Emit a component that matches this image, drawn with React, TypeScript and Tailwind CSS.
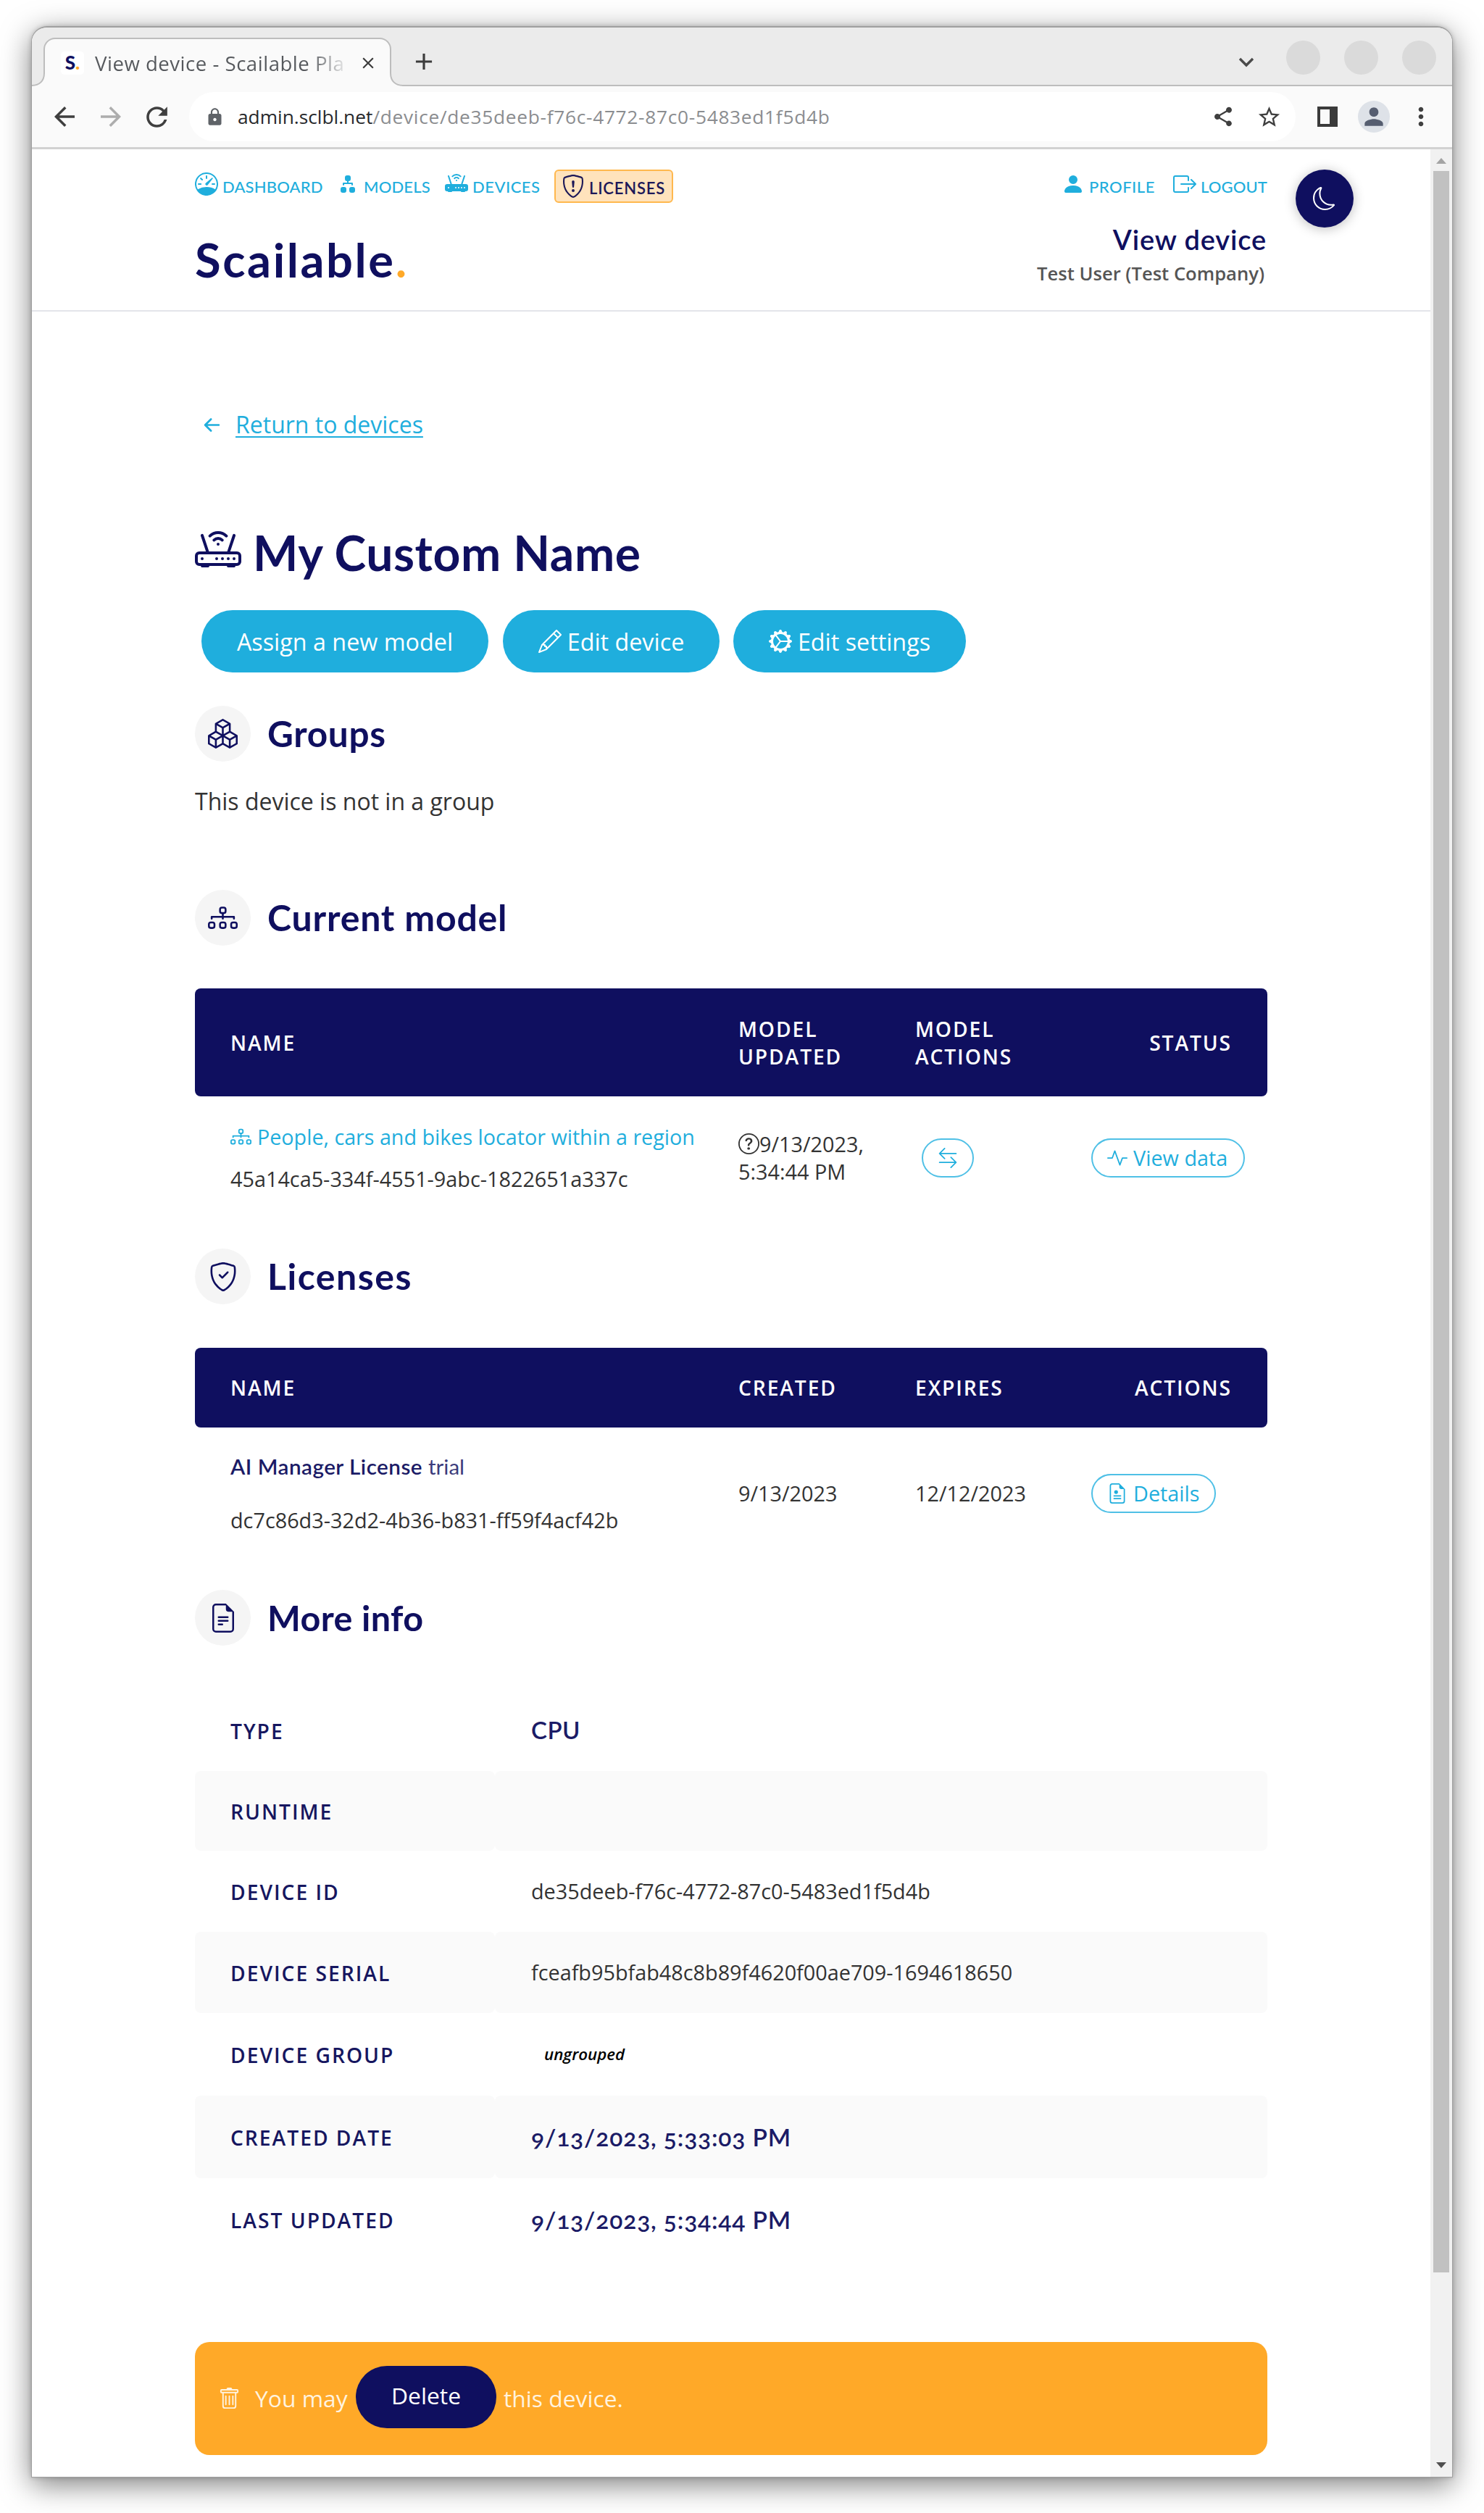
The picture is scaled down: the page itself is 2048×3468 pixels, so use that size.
import type { ReactNode } from 'react';
import {
  BsActivity,
  BsArrowLeftRight,
  BsBoxArrowRight,
  BsBoxes,
  BsDiagram2Fill,
  BsDiagram3,
  BsFileEarmarkText,
  BsGearWideConnected,
  BsMoon,
  BsPencil,
  BsPersonFill,
  BsQuestionCircle,
  BsRouter,
  BsRouterFill,
  BsArrowLeftShort,
  BsShieldCheck,
  BsShieldExclamation,
  BsSpeedometer,
  BsTrash,
} from 'react-icons/bs';
import {
  MdArrowBack,
  MdArrowForward,
  MdClose,
  MdAdd,
  MdLock,
  MdMoreVert,
  MdPerson,
  MdRefresh,
  MdShare,
  MdStarBorder,
} from 'react-icons/md';

const LATO = "font-['Lato',sans-serif]";

function TabStrip() {
  return (
    <div className="flex h-[81px] items-end border-b-2 border-[#bdbdbd] bg-[#ebebeb] pl-[16px]">
      <div className="relative -mb-[2px] flex h-[67px] w-[480px] items-center rounded-t-[16px] border-2 border-b-0 border-[#bdbdbd] bg-[#fafafa] pl-[22px]">
        <svg className="absolute -left-[18px] bottom-0 h-[18px] w-[18px]" viewBox="0 0 18 18">
          <path d="M0 18V17C10 17 17 11 17 0H18V18Z" fill="#fafafa" />
          <path d="M0 17C10 17 17 11 17 0" fill="none" stroke="#bdbdbd" strokeWidth="2" />
        </svg>
        <svg className="absolute -right-[18px] bottom-0 h-[18px] w-[18px]" viewBox="0 0 18 18">
          <path d="M18 18V17C8 17 1 11 1 0H0V18Z" fill="#fafafa" />
          <path d="M18 17C8 17 1 11 1 0" fill="none" stroke="#bdbdbd" strokeWidth="2" />
        </svg>
        <span className="flex h-[32px] w-[32px] items-center justify-center rounded-[5px] bg-white font-['Lato',sans-serif] text-[26px] font-black text-[#0f0f5f]">
          S<span className="text-[#ffa928]">.</span>
        </span>
        <span className="ml-[15px] w-[352px] overflow-hidden bg-linear-to-r from-[#55585c] from-84% to-transparent to-100% bg-clip-text text-[27.6px] leading-[40px] tracking-[0.5px] whitespace-nowrap text-transparent">
          View device - Scailable Pla
        </span>
        <MdClose className="ml-[12px] h-[26px] w-[26px] text-[#3c3c3c]" />
      </div>
      <MdAdd className="mb-[13px] ml-[26px] h-[38px] w-[38px] text-[#3c3c3c]" />
      <div className="mr-[22px] mb-[14px] ml-auto flex items-center">
        <svg className="mt-[12px] mr-[44px] h-[14px] w-[22px]" viewBox="0 0 22 14">
          <path d="M2 2L11 11L20 2" fill="none" stroke="#4a4a4a" strokeWidth="3.4" />
        </svg>
        <div className="flex gap-[33px]">
          <span className="h-[47px] w-[47px] rounded-full bg-[#dadada]" />
          <span className="h-[47px] w-[47px] rounded-full bg-[#dadada]" />
          <span className="h-[47px] w-[47px] rounded-full bg-[#dadada]" />
        </div>
      </div>
    </div>
  );
}

function Toolbar() {
  return (
    <div className="flex h-[87px] items-center border-b-3 border-[#d2d2d2] bg-[#fafafa] pl-[24px] text-[#3f3f3f]">
      <MdArrowBack className="h-[42px] w-[42px]" />
      <MdArrowForward className="ml-[22px] h-[42px] w-[42px] text-[#adadad]" />
      <MdRefresh className="ml-[21px] h-[43px] w-[43px]" />
      <div className="ml-[23px] flex h-[68px] w-[1527px] items-center rounded-full bg-white pl-[22px]">
        <MdLock className="h-[27px] w-[27px] text-[#5f6368]" />
        <span className="mt-[2px] ml-[18px] text-[26.3px] tracking-[0.7px] whitespace-nowrap text-[#8b8d90]">
          <span className="tracking-normal text-[#27292c]">admin.sclbl.net</span>/device/de35deeb-f76c-4772-87c0-5483ed1f5d4b
        </span>
        <MdShare className="ml-auto h-[32px] w-[32px]" />
        <MdStarBorder className="mr-[19px] ml-[30px] h-[35px] w-[35px]" />
      </div>
      <svg className="ml-[30px] h-[28px] w-[28px]" viewBox="0 0 28 28">
        <path d="M0 0H28V28H0ZM4 4V24H17V4Z" fill="#3a3a3a" fillRule="evenodd" />
      </svg>
      <span className="ml-[28px] flex h-[44px] w-[44px] items-center justify-center rounded-full bg-[#dee2e8]">
        <MdPerson className="h-[38px] w-[38px] text-[#565e70]" />
      </span>
      <MdMoreVert className="ml-[23px] h-[40px] w-[40px]" />
    </div>
  );
}

function NavItem({ icon, label, width }: { icon: ReactNode; label: string; width: string }) {
  return (
    <a className="flex items-center">
      <span className="mb-[6px]">{icon}</span>
      <span className={`ml-[6px] ${LATO} text-[22px] font-medium whitespace-nowrap ${width}`}>{label}</span>
    </a>
  );
}

function SiteHeader() {
  return (
    <header className="flex h-[224px] justify-between border-b-2 border-[#e3e5ea] pt-[28px] pr-[226px] pl-[225px] text-[#1faedd]">
      <div>
        <nav className="flex h-[46px] items-center gap-[21px]">
          <NavItem icon={<BsSpeedometer className="h-[32px] w-[32px]" />} label="DASHBOARD" width="w-[136px] tracking-[0.15px]" />
          <NavItem icon={<BsDiagram2Fill className="h-[32px] w-[32px]" />} label="MODELS" width="w-[91px] tracking-[0.15px]" />
          <NavItem icon={<BsRouterFill className="h-[32px] w-[32px]" />} label="DEVICES" width="w-[92px] tracking-[0.5px]" />
          <a className="flex h-[46px] w-[164px] items-center rounded-[6px] border-2 border-[#ffb84e] bg-[#ffe3bc] pl-[8px] text-[#1c1858]">
            <BsShieldExclamation className="h-[32px] w-[32px]" />
            <span className="mt-[4px] ml-[6px] font-['Lato',sans-serif] text-[22px] font-semibold tracking-[0.8px]">LICENSES</span>
          </a>
        </nav>
        <div className="mt-[38px] font-['Lato',sans-serif] text-[65px] leading-[80px] font-bold tracking-[2.6px] text-[#0f0f5f]">
          Scailable<span className="text-[#ffa928]">.</span>
        </div>
      </div>
      <div className="flex flex-col items-end">
        <nav className="flex h-[46px] items-center gap-[26px]">
          <NavItem icon={<BsPersonFill className="h-[32px] w-[32px]" />} label="PROFILE" width="w-[90px] tracking-[0.5px]" />
          <NavItem icon={<BsBoxArrowRight className="h-[32px] w-[32px]" />} label="LOGOUT" width="w-[91px] tracking-[0.1px]" />
        </nav>
        <div className="mt-[26px] font-['Lato',sans-serif] text-[38px] leading-[48px] font-semibold tracking-[0.85px] text-[#0f0f5f]">
          View device
        </div>
        <div className="mt-[4px] mr-[3px] text-[25.6px] leading-[40px] font-semibold text-[#555]">Test User (Test Company)</div>
      </div>
    </header>
  );
}

function SectionHeading({ icon, title, className }: { icon: ReactNode; title: string; className: string }) {
  return (
    <div className={`flex h-[77px] items-center font-['Lato',sans-serif] font-bold text-[#0f0f5f] ${className}`}>
      <span className="flex h-[77px] w-[77px] items-center justify-center rounded-full bg-[#f5f5f5]">{icon}</span>
      <h2 className="ml-[23px]">{title}</h2>
    </div>
  );
}

function FilePostIcon({ className }: { className: string }) {
  return (
    <svg className={className} viewBox="0 0 16 16" fill="currentColor">
      <path d="M14 4.5V14a2 2 0 0 1-2 2H4a2 2 0 0 1-2-2V2a2 2 0 0 1 2-2h5.500zm-3 0A1.500 1.500 0 0 1 9.500 3V1H4a1 1 0 0 0-1 1v12a1 1 0 0 0 1 1h8a1 1 0 0 0 1-1V4.500z" />
      <circle cx="7" cy="6.900" r="1.500" />
      <path d="M5 9.400h6v1H5zM5 11.500h6v1H5z" />
    </svg>
  );
}

const GRID = 'grid grid-cols-[701px_244px_243px_1fr] items-center pl-[49px]';
const HEAD = `${GRID} rounded-[8px] bg-[#0f0f5f] text-[28.2px] leading-[38px] font-semibold tracking-[1.9px] text-white`;
const PILL = 'inline-flex h-[54px] items-center rounded-full border-2 border-[#4fc0e6] text-[28.8px] text-[#1faedd]';
const BUTTON = 'flex h-[86px] items-center rounded-full bg-[#1faedd] text-[32.3px] text-white';

const details = [
  { label: 'TYPE', height: 'h-[112px]', value: 'CPU', style: 'cpu' },
  { label: 'RUNTIME', height: 'h-[110px]', value: '', style: 'plain' },
  { label: 'DEVICE ID', height: 'h-[112px]', value: 'de35deeb-f76c-4772-87c0-5483ed1f5d4b', style: 'plain' },
  { label: 'DEVICE SERIAL', height: 'h-[112px]', value: 'fceafb95bfab48c8b89f4620f00ae709-1694618650', style: 'plain' },
  { label: 'DEVICE GROUP', height: 'h-[114px]', value: 'ungrouped', style: 'italic' },
  { label: 'CREATED DATE', height: 'h-[114px]', value: '9/13/2023, 5:33:03 PM', style: 'date' },
  { label: 'LAST UPDATED', height: 'h-[114px]', value: '9/13/2023, 5:34:44 PM', style: 'date' },
];

const valueStyles: Record<string, string> = {
  cpu: "font-['Lato',sans-serif] text-[33px] font-semibold tracking-[0.5px] text-[#1b1b66]",
  date: "font-['Lato',sans-serif] text-[33.5px] font-semibold tracking-[0.85px] text-[#1b1b66] [font-feature-settings:'onum']",
  plain: 'text-[28.8px]',
  italic: 'pl-[18px] text-[22.3px] font-semibold italic text-black',
};

function DetailsTable() {
  return (
    <div className="mt-[61px]">
      {details.map((row, i) => (
        <div key={row.label} className={`flex ${row.height}`}>
          <div
            className={`flex w-[414px] items-center rounded-[8px] pt-[2px] pl-[49px] text-[28.2px] font-semibold tracking-[2px] text-[#16165f] ${i % 2 ? 'bg-[#fafafa]' : ''}`}
          >
            {row.label}
          </div>
          <div className={`flex flex-1 items-center rounded-[8px] pl-[50px] ${i % 2 ? 'bg-[#fafafa]' : ''}`}>
            <span className={valueStyles[row.style]}>{row.value}</span>
          </div>
        </div>
      ))}
    </div>
  );
}

function Content() {
  return (
    <main className="mr-[225px] ml-[225px] text-[#333]">
      <a className="mt-[132px] flex h-[48px] items-center pl-[2px] text-[#1faedd]">
        <BsArrowLeftShort className="h-[43px] w-[43px]" />
        <span className="ml-[11px] text-[32px] underline decoration-2 underline-offset-[4px]">Return to devices</span>
      </a>

      <h1 className="mt-[111px] flex h-[80px] items-center text-[#0f0f5f]">
        <BsRouter className="h-[64px] w-[64px]" />
        <span className="mt-[2px] ml-[16px] font-['Lato',sans-serif] text-[66px] font-bold tracking-[0.55px]">My Custom Name</span>
      </h1>

      <div className="mt-[41px] flex pl-[9px]">
        <button className={`${BUTTON} w-[396px] justify-center`}>Assign a new model</button>
        <button className={`${BUTTON} ml-[20px] w-[299px] justify-center`}>
          <BsPencil className="mr-[8px] h-[32px] w-[32px]" />
          Edit device
        </button>
        <button className={`${BUTTON} ml-[19px] w-[321px] justify-center`}>
          <BsGearWideConnected className="mr-[8px] h-[32px] w-[32px]" />
          Edit settings
        </button>
      </div>

      <SectionHeading
        className="mt-[46px] text-[49.5px] tracking-[0.7px]"
        title="Groups"
        icon={<BsBoxes className="h-[41px] w-[41px]" />}
      />
      <p className="mt-[31px] text-[32px] leading-[48px]">This device is not in a group</p>

      <SectionHeading
        className="mt-[98px] text-[50px] tracking-[0.8px]"
        title="Current model"
        icon={<BsDiagram3 className="h-[41px] w-[41px]" />}
      />
      <div className={`${HEAD} mt-[59px] h-[149px]`}>
        <div>NAME</div>
        <div>
          MODEL
          <br />
          UPDATED
        </div>
        <div>
          MODEL
          <br />
          ACTIONS
        </div>
        <div className="mr-[49px] text-right">STATUS</div>
      </div>
      <div className={`${GRID} h-[169px] text-[28.8px]`}>
        <div className="leading-[58px] whitespace-nowrap">
          <div className="flex items-center text-[28.7px]">
            <BsDiagram3 className="mr-[8px] h-[29px] w-[29px] text-[#1faedd]" />
            <span className="text-[#1faedd]">People, cars and bikes locator within a region</span>
          </div>
          <div>45a14ca5-334f-4551-9abc-1822651a337c</div>
        </div>
        <div className="leading-[38px]">
          <div className="flex items-center">
            <BsQuestionCircle className="h-[29px] w-[29px]" />
            9/13/2023,
          </div>
          5:34:44 PM
        </div>
        <div>
          <span className={`${PILL} ml-[9px] w-[72px] justify-center`}>
            <BsArrowLeftRight className="h-[28px] w-[28px]" />
          </span>
        </div>
        <div>
          <span className={`${PILL} w-[212px] pl-[20px]`}>
            <BsActivity className="mr-[8px] h-[28px] w-[28px]" />
            View data
          </span>
        </div>
      </div>

      <SectionHeading
        className="mt-[41px] text-[50px] tracking-[1.5px]"
        title="Licenses"
        icon={<BsShieldCheck className="h-[40px] w-[40px]" />}
      />
      <div className={`${HEAD} mt-[60px] h-[110px]`}>
        <div>NAME</div>
        <div>CREATED</div>
        <div>EXPIRES</div>
        <div className="mr-[49px] text-right">ACTIONS</div>
      </div>
      <div className={`${GRID} h-[182px] text-[28.8px]`}>
        <div className="leading-[74px] whitespace-nowrap">
          <div className="font-['Lato',sans-serif] text-[29.6px] font-semibold tracking-[0.5px] text-[#1b1b66]">
            AI Manager License <span className="font-normal tracking-normal text-[#3c3c7c]">trial</span>
          </div>
          <div>dc7c86d3-32d2-4b36-b831-ff59f4acf42b</div>
        </div>
        <div>9/13/2023</div>
        <div>12/12/2023</div>
        <div>
          <span className={`${PILL} w-[172px] pl-[20px]`}>
            <FilePostIcon className="mr-[8px] h-[28px] w-[28px]" />
            Details
          </span>
        </div>
      </div>

      <SectionHeading
        className="mt-[42px] text-[48.5px] tracking-[0.4px]"
        title="More info"
        icon={<BsFileEarmarkText className="h-[40px] w-[40px]" />}
      />
      <DetailsTable />

      <div className="mt-[112px] flex h-[156px] items-center rounded-[20px] bg-[#ffa928] pl-[32px] text-[31.8px] text-[#fff3df]">
        <BsTrash className="h-[31px] w-[31px]" />
        <span className="ml-[20px] w-[139px] whitespace-nowrap">You may</span>
        <button className="mb-[5px] h-[86px] w-[194px] rounded-full bg-[#0f0f5f] pb-[4px] text-[31.8px] text-white">Delete</button>
        <span className="ml-[10px]">this device.</span>
      </div>
    </main>
  );
}

function Scrollbar() {
  return (
    <div className="flex w-[30px] flex-col items-center bg-[#f1f1f1]">
      <svg className="mt-[12px] h-[8px] w-[14px]" viewBox="0 0 14 8">
        <path d="M7 0L14 8H0Z" fill="#a3a3a3" />
      </svg>
      <div className="mt-[10px] h-[2900px] w-[22px] bg-[#c1c1c1]" />
      <svg className="mt-auto mb-[12px] h-[8px] w-[14px]" viewBox="0 0 14 8">
        <path d="M7 8L14 0H0Z" fill="#505050" />
      </svg>
    </div>
  );
}

export default function App() {
  return (
    <div className="h-[3468px] w-[2048px] overflow-hidden bg-white pt-[36px] pl-[43px] font-['Open_Sans',sans-serif]">
      <div className="relative flex h-[3383px] w-[1962px] flex-col overflow-hidden rounded-t-[22px] border border-t-2 border-[#a0a0a0] bg-white shadow-[0_10px_40px_rgba(0,0,0,0.5),0_0_6px_rgba(0,0,0,0.2)]">
        <TabStrip />
        <Toolbar />
        <div className="flex flex-1">
          <div className="flex-1">
            <SiteHeader />
            <Content />
          </div>
          <Scrollbar />
        </div>
        <button className="absolute top-[196px] left-[1744px] flex h-[80px] w-[80px] items-center justify-center rounded-full bg-[#0f0f5f] text-white shadow-[0_2px_16px_rgba(0,0,0,0.25)]">
          <BsMoon className="h-[32px] w-[32px]" />
        </button>
      </div>
    </div>
  );
}
